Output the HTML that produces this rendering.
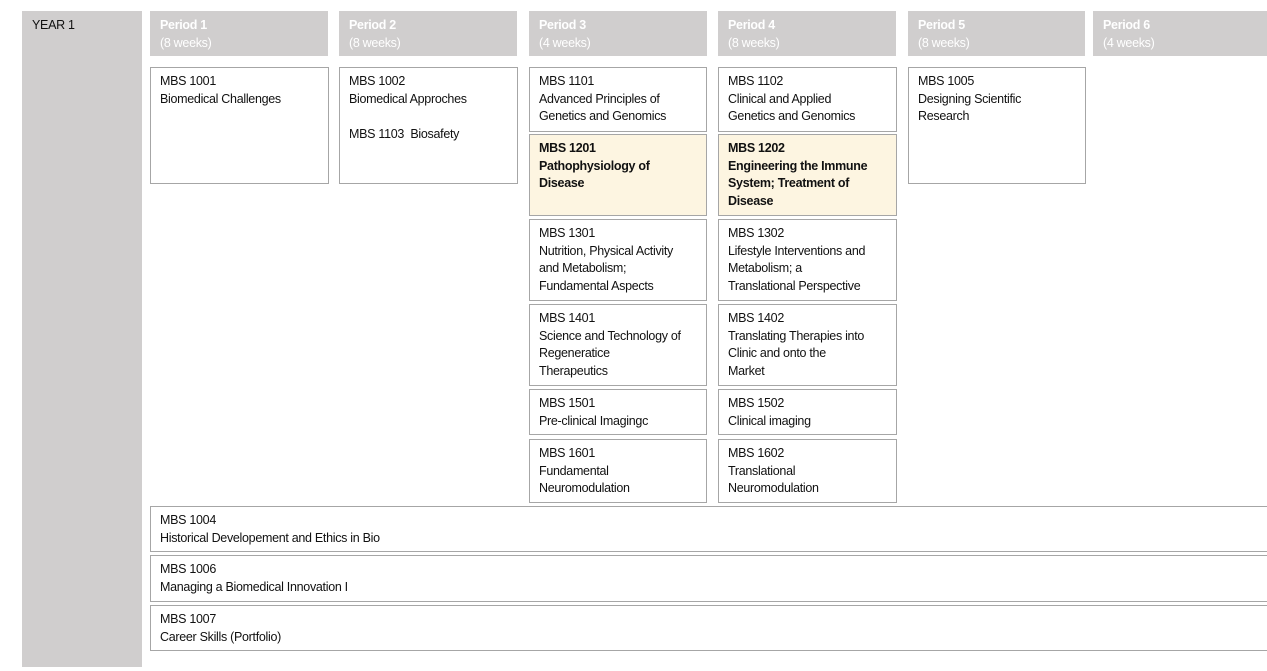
<!DOCTYPE html>
<html><head><meta charset="utf-8"><style>
body{margin:0;width:1267px;height:671px;background:#fff;position:relative;overflow:hidden;font-family:"Liberation Sans",sans-serif;font-size:12.5px;letter-spacing:-0.3px;color:#111;line-height:17.7px}
div.a{position:absolute;box-sizing:border-box}
.h{background:#d0cece;color:#fff;font-weight:bold;padding:6px 10px}
.h span{font-weight:normal}
.b{border:1px solid #a6a6a6;background:#fff;padding:5px 9px}
.y{background:#fdf5e1;font-weight:bold}
</style></head><body>
<div class="a" style="left:22px;top:11px;width:120px;height:656px;background:#d0cece;padding:6px 10px">YEAR 1</div>
<div class="a h" style="left:150px;top:11px;width:178px;height:45px">Period 1<br><span>(8 weeks)</span></div>
<div class="a h" style="left:339px;top:11px;width:178px;height:45px">Period 2<br><span>(8 weeks)</span></div>
<div class="a h" style="left:529px;top:11px;width:178px;height:45px">Period 3<br><span>(4 weeks)</span></div>
<div class="a h" style="left:718px;top:11px;width:178px;height:45px">Period 4<br><span>(8 weeks)</span></div>
<div class="a h" style="left:908px;top:11px;width:177px;height:45px">Period 5<br><span>(8 weeks)</span></div>
<div class="a h" style="left:1093px;top:11px;width:180px;height:45px">Period 6<br><span>(4 weeks)</span></div>

<div class="a b" style="left:150px;top:67px;width:179px;height:117px">MBS 1001<br>Biomedical Challenges</div>
<div class="a b" style="left:339px;top:67px;width:179px;height:117px">MBS 1002<br>Biomedical Approches<br><br>MBS 1103&nbsp; Biosafety</div>
<div class="a b" style="left:908px;top:67px;width:178px;height:117px">MBS 1005<br>Designing Scientific<br>Research</div>

<div class="a b" style="left:529px;top:67px;width:178px;height:65px">MBS 1101<br>Advanced Principles of<br>Genetics and Genomics</div>
<div class="a b y" style="left:529px;top:134px;width:178px;height:82px">MBS 1201<br>Pathophysiology of<br>Disease</div>
<div class="a b" style="left:529px;top:219px;width:178px;height:82px">MBS 1301<br>Nutrition, Physical Activity<br>and Metabolism;<br>Fundamental Aspects</div>
<div class="a b" style="left:529px;top:304px;width:178px;height:82px">MBS 1401<br>Science and Technology of<br>Regeneratice<br>Therapeutics</div>
<div class="a b" style="left:529px;top:389px;width:178px;height:46px">MBS 1501<br>Pre-clinical Imagingc</div>
<div class="a b" style="left:529px;top:439px;width:178px;height:64px">MBS 1601<br>Fundamental<br>Neuromodulation</div>

<div class="a b" style="left:718px;top:67px;width:179px;height:65px">MBS 1102<br>Clinical and Applied<br>Genetics and Genomics</div>
<div class="a b y" style="left:718px;top:134px;width:179px;height:82px">MBS 1202<br>Engineering the Immune<br>System; Treatment of<br>Disease</div>
<div class="a b" style="left:718px;top:219px;width:179px;height:82px">MBS 1302<br>Lifestyle Interventions and<br>Metabolism; a<br>Translational Perspective</div>
<div class="a b" style="left:718px;top:304px;width:179px;height:82px">MBS 1402<br>Translating Therapies into<br>Clinic and onto the<br>Market</div>
<div class="a b" style="left:718px;top:389px;width:179px;height:46px">MBS 1502<br>Clinical imaging</div>
<div class="a b" style="left:718px;top:439px;width:179px;height:64px">MBS 1602<br>Translational<br>Neuromodulation</div>

<div class="a b" style="left:150px;top:506px;width:1130px;height:46px">MBS 1004<br>Historical Developement and Ethics in Bio</div>
<div class="a b" style="left:150px;top:555px;width:1130px;height:47px">MBS 1006<br>Managing a Biomedical Innovation I</div>
<div class="a b" style="left:150px;top:605px;width:1130px;height:46px">MBS 1007<br>Career Skills (Portfolio)</div>
</body></html>
